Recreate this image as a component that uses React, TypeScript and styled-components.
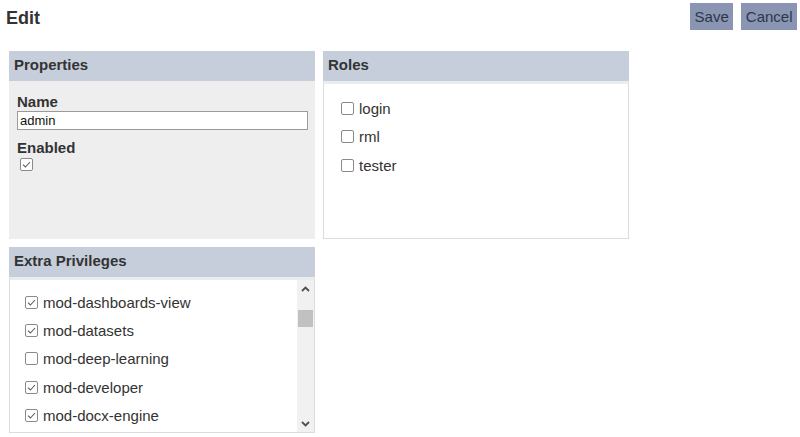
import React, { useState } from "react";
import styled, { createGlobalStyle } from "styled-components";

const GlobalStyle = createGlobalStyle`
  body {
    margin: 0;
    background: #fff;
    font-family: "Liberation Sans", Arial, sans-serif;
    color: #333;
  }
`;

const Page = styled.div`
  width: 800px;
  height: 437px;
  overflow: hidden;
`;

const TopBar = styled.div`
  display: flex;
  justify-content: space-between;
  align-items: flex-start;
  height: 51px;
  padding: 3px 3px 0 6px;
  box-sizing: border-box;
`;

const Title = styled.h1`
  margin: 5px 0 0;
  font-size: 18px;
  font-weight: bold;
  color: #333;
`;

const Actions = styled.div`
  display: flex;
  gap: 8px;
`;

const ActionButton = styled.button.attrs({ type: "button" })`
  height: 27px;
  padding: 0 4.5px;
  font-family: "Liberation Sans", Arial, sans-serif;
  font-size: 15px;
  color: #2f3646;
  background: #8995b3;
  border: none;
  cursor: pointer;
`;

const Grid = styled.div`
  display: grid;
  grid-template-columns: 306px 306px;
  grid-template-rows: 188px 186px;
  gap: 8px;
  padding-left: 9px;
`;

const Panel = styled.section`
  display: flex;
  flex-direction: column;
  min-height: 0;
`;

const PanelHeader = styled.div`
  height: 30px;
  box-sizing: border-box;
  flex: none;
  display: flex;
  align-items: center;
  padding: 0 0 4px 5px;
  font-size: 15px;
  font-weight: bold;
  color: #333;
  background: #c6cedb;
`;

const PanelBody = styled.div<{ $grey?: boolean }>`
  flex: 1;
  min-height: 0;
  box-sizing: border-box;
  background: ${(p) => (p.$grey ? "#eeeeee" : "#fff")};
  border: ${(p) => (p.$grey ? "none" : "1px solid #dcdcdc")};
  border-top: ${(p) => (p.$grey ? "none" : "3px solid #e9ecf0")};
`;

const Form = styled.div`
  padding: 12px 7px 0 8px;
`;

const FieldLabel = styled.div`
  font-size: 15px;
  font-weight: bold;
  line-height: 17px;
  color: #333;
`;

const TextInput = styled.input`
  display: block;
  width: 291px;
  height: 19px;
  box-sizing: border-box;
  margin: 1px 0 9px;
  padding: 0 2px;
  font-family: "Liberation Sans", Arial, sans-serif;
  font-size: 13px;
  color: #111;
  border: 1px solid #9a9a9a;
  outline: none;
`;

const Toggle = styled.div`
  margin-top: 1px;
  cursor: pointer;
`;

const BoxWrap = styled.span<{ $ml?: number }>`
  display: inline-flex;
  margin-left: ${(p) => p.$ml ?? 0}px;
  margin-right: 5px;
  flex: none;
`;

const CheckList = styled.ul<{ $pl: number; $pt: number; $row: number }>`
  list-style: none;
  margin: 0;
  padding: ${(p) => p.$pt}px 0 0 ${(p) => p.$pl}px;

  & > li {
    height: ${(p) => p.$row}px;
  }
`;

const CheckRow = styled.li`
  display: flex;
  align-items: center;
  font-size: 15px;
  color: #333;
  white-space: nowrap;
  cursor: pointer;
`;

const ScrollArea = styled.div`
  display: flex;
  height: 100%;
`;

const ScrollList = styled.div`
  flex: 1;
  overflow-y: auto;
  scrollbar-width: none;
  &::-webkit-scrollbar {
    display: none;
  }
`;

const ScrollTrack = styled.div`
  width: 17px;
  flex: none;
  display: flex;
  flex-direction: column;
  background: #f1f1f1;
`;

const ArrowButton = styled.div`
  height: 17px;
  display: flex;
  align-items: center;
  justify-content: center;
  flex: none;
`;

const Thumb = styled.div`
  height: 17px;
  margin: 13px 1px 0;
  background: #c1c1c1;
`;

const Spacer = styled.div`
  flex: 1;
`;

const Box: React.FC<{ checked: boolean; ml?: number }> = ({ checked, ml }) => (
  <BoxWrap $ml={ml}>
    <svg width="13" height="13" viewBox="0 0 13 13">
      <rect x="0.5" y="0.5" width="12" height="12" rx="1.5" fill="#fff" stroke="#8a8a8a" />
      {checked && (
        <polyline points="3,6.6 5.4,9 10,4" fill="none" stroke="#5a5a5a" strokeWidth="1.1" />
      )}
    </svg>
  </BoxWrap>
);

const Chevron: React.FC<{ up?: boolean }> = ({ up }) => (
  <svg width="9" height="6" viewBox="0 0 9 6">
    <polyline
      points={up ? "1,5 4.5,1.5 8,5" : "1,1 4.5,4.5 8,1"}
      fill="none"
      stroke="#505050"
      strokeWidth="1.8"
    />
  </svg>
);

const roles = [
  { name: "login", on: false },
  { name: "rml", on: false },
  { name: "tester", on: false },
];

const privileges = [
  { name: "mod-dashboards-view", on: true },
  { name: "mod-datasets", on: true },
  { name: "mod-deep-learning", on: false },
  { name: "mod-developer", on: true },
  { name: "mod-docx-engine", on: true },
];

export default function App() {
  const [name, setName] = useState("admin");
  const [enabled, setEnabled] = useState(true);

  return (
    <Page>
      <GlobalStyle />
      <TopBar>
        <Title>Edit</Title>
        <Actions>
          <ActionButton>Save</ActionButton>
          <ActionButton>Cancel</ActionButton>
        </Actions>
      </TopBar>
      <Grid>
        <Panel>
          <PanelHeader>Properties</PanelHeader>
          <PanelBody $grey>
            <Form>
              <FieldLabel>Name</FieldLabel>
              <TextInput value={name} onChange={(e) => setName(e.target.value)} />
              <FieldLabel>Enabled</FieldLabel>
              <Toggle onClick={() => setEnabled(!enabled)}>
                <Box checked={enabled} ml={3} />
              </Toggle>
            </Form>
          </PanelBody>
        </Panel>
        <Panel>
          <PanelHeader>Roles</PanelHeader>
          <PanelBody>
            <CheckList $pl={17} $pt={10} $row={28.6}>
              {roles.map((r) => (
                <CheckRow key={r.name}>
                  <Box checked={r.on} />
                  {r.name}
                </CheckRow>
              ))}
            </CheckList>
          </PanelBody>
        </Panel>
        <Panel>
          <PanelHeader>Extra Privileges</PanelHeader>
          <PanelBody>
            <ScrollArea>
              <ScrollList>
                <CheckList $pl={15} $pt={8} $row={28.3}>
                  {privileges.map((p) => (
                    <CheckRow key={p.name}>
                      <Box checked={p.on} />
                      {p.name}
                    </CheckRow>
                  ))}
                </CheckList>
              </ScrollList>
              <ScrollTrack>
                <ArrowButton>
                  <Chevron up />
                </ArrowButton>
                <Thumb />
                <Spacer />
                <ArrowButton>
                  <Chevron />
                </ArrowButton>
              </ScrollTrack>
            </ScrollArea>
          </PanelBody>
        </Panel>
      </Grid>
    </Page>
  );
}
